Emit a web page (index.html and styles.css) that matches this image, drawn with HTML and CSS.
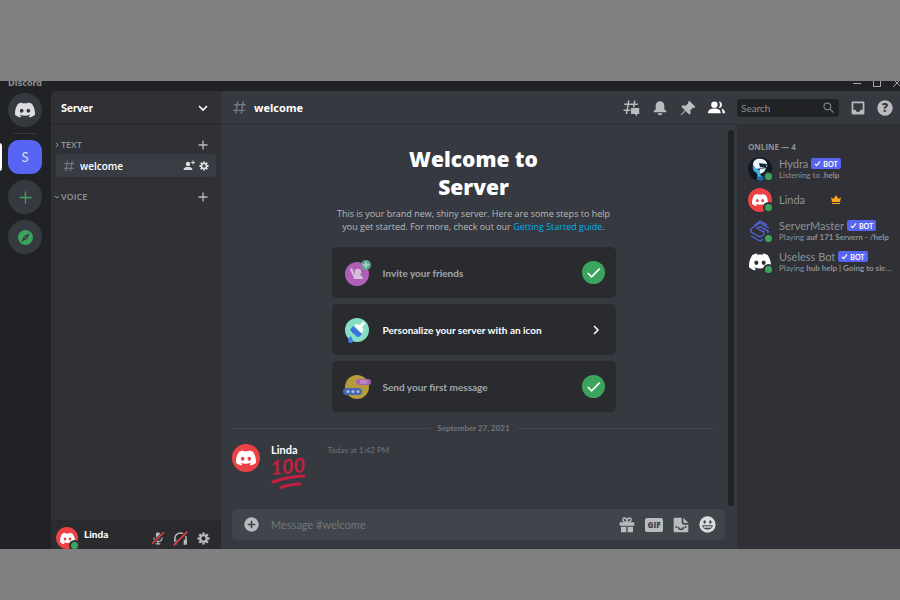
FILE: index.html
```html
<!DOCTYPE html>
<html lang="en">

<head>
  <meta charset="UTF-8" />
  <title>Discord</title>
  <meta name="viewport" content="width=device-width, initial-scale=1.0" />
  <link rel="stylesheet" href="styles.css">
</head>

<body>
  <svg class="sprite" aria-hidden="true">
    <symbol id="logo" viewBox="0 0 24 24">
      <path fill="currentColor" d="M20.317 4.3698a19.7913 19.7913 0 00-4.8851-1.5152.0741.0741 0 00-.0785.0371c-.211.3753-.4447.8648-.6083 1.2495-1.8447-.2762-3.68-.2762-5.4868 0-.1636-.3933-.4058-.8742-.6177-1.2495a.077.077 0 00-.0785-.037 19.7363 19.7363 0 00-4.8852 1.515.0699.0699 0 00-.0321.0277C.5334 9.0458-.319 13.5799.0992 18.0578a.0824.0824 0 00.0312.0561c2.0528 1.5076 4.0413 2.4228 5.9929 3.0294a.0777.0777 0 00.0842-.0276c.4616-.6304.8731-1.2952 1.226-1.9942a.076.076 0 00-.0416-.1057c-.6528-.2476-1.2743-.5495-1.8722-.8923a.077.077 0 01-.0076-.1277c.1258-.0943.2517-.1923.3718-.2914a.0743.0743 0 01.0776-.0105c3.9278 1.7933 8.18 1.7933 12.0614 0a.0739.0739 0 01.0785.0095c.1202.099.246.1981.3728.2924a.077.077 0 01-.0066.1276 12.2986 12.2986 0 01-1.873.8914.0766.0766 0 00-.0407.1067c.3604.698.7719 1.3628 1.225 1.9932a.076.076 0 00.0842.0286c1.961-.6067 3.9495-1.5219 6.0023-3.0294a.077.077 0 00.0313-.0552c.5004-5.177-.8382-9.6739-3.5485-13.6604a.061.061 0 00-.0312-.0286zM8.02 15.3312c-1.1825 0-2.1569-1.0857-2.1569-2.419 0-1.3332.9555-2.4189 2.157-2.4189 1.2108 0 2.1757 1.0952 2.1568 2.419 0 1.3332-.9555 2.4189-2.1569 2.4189zm7.9748 0c-1.1825 0-2.1569-1.0857-2.1569-2.419 0-1.3332.9554-2.4189 2.1569-2.4189 1.2108 0 2.1757 1.0952 2.1568 2.419 0 1.3332-.946 2.4189-2.1568 2.4189Z" />
    </symbol>
    <symbol id="hash" viewBox="0 0 24 24">
      <path fill="none" stroke="currentColor" stroke-width="2" d="M9.5 3 6.5 21M17.5 3l-3 18M4 8h17M3 16h17" />
    </symbol>
    <symbol id="plus" viewBox="0 0 24 24">
      <path fill="none" stroke="currentColor" stroke-width="2.6" d="M12 3v18M3 12h18" />
    </symbol>
    <symbol id="gear" viewBox="0 0 24 24">
      <circle cx="12" cy="12" r="6" fill="none" stroke="currentColor" stroke-width="4" />
      <path stroke="currentColor" stroke-width="4.4" d="M12 1v4M12 19v4M1 12h4M19 12h4M4.200 4.200l2.900 2.900M16.900 16.900l2.900 2.900M4.200 19.800l2.900-2.900M16.900 7.100l2.900-2.900" />
    </symbol>
    <symbol id="check" viewBox="0 0 24 24">
      <circle cx="12" cy="12" r="12" fill="#3ba55d" />
      <path fill="none" stroke="#fff" stroke-width="1.7" d="m6 12.500 4 4 8.500-8.500" />
    </symbol>
    <symbol id="tick" viewBox="0 0 12 12">
      <path fill="none" stroke="currentColor" stroke-width="2" d="m1.500 6.500 3 3 6-7" />
    </symbol>
  </svg>

  <div class="app">
    <div class="titlebar">
      <span class="wordmark">Discord</span>
      <svg class="window-controls" width="47" height="8" viewBox="0 0 47 8">
        <path fill="none" stroke="#a3a6aa" d="M0 2.500h8M20.500-1.500h7v7h-7zM40-2l8 8M40 6l8-8" />
      </svg>
    </div>

    <div class="layout">
      <nav class="guilds">
        <button class="guild home" aria-label="Home"><svg width="20" height="20"><use href="#logo" /></svg></button>
        <div class="guild-separator"></div>
        <button class="guild selected">S</button>
        <button class="guild green" aria-label="Add a server"><svg width="13" height="13" viewBox="0 0 24 24"><path stroke="currentColor" stroke-width="2.400" d="M12 1v22M1 12h22" /></svg></button>
        <button class="guild green" aria-label="Explore"><svg width="15" height="15" viewBox="0 0 24 24"><circle cx="12" cy="12" r="12" fill="currentColor" /><path fill="#36393f" fill-rule="evenodd" d="M19 5 14.500 14.500 5 19l4.500-9.500zM12 10.500a1.500 1.500 0 1 0 0 3 1.500 1.500 0 0 0 0-3z" /></svg></button>
      </nav>

      <aside class="sidebar">
        <button class="server-header">
          <span>Server</span>
          <svg width="10" height="10" viewBox="0 0 10 10"><path fill="none" stroke="#fff" stroke-width="1.600" d="m1 3 4 4 4-4" /></svg>
        </button>
        <div class="channels">
          <div class="category">
            <svg width="6" height="6" viewBox="0 0 6 6"><path fill="none" stroke="currentColor" d="m2 1 2 2-2 2" /></svg>
            <span>TEXT</span>
            <button aria-label="Create channel"><svg width="12" height="12"><use href="#plus" /></svg></button>
          </div>
          <a class="channel" href="#">
            <svg class="channel-hash" width="14" height="14"><use href="#hash" /></svg>
            <span>welcome</span>
            <svg width="12" height="12" viewBox="0 0 24 24"><circle cx="10" cy="8" r="4.500" fill="currentColor" /><path fill="currentColor" d="M1 20c0-5 5-6 9-6s9 1 9 6z" /><path stroke="currentColor" stroke-width="2" d="M20 1v8M16 5h8" /></svg>
            <svg width="10" height="10"><use href="#gear" /></svg>
          </a>
          <div class="category">
            <svg width="6" height="6" viewBox="0 0 6 6"><path fill="none" stroke="currentColor" d="m1 2 2 2 2-2" /></svg>
            <span>VOICE</span>
            <button aria-label="Create channel"><svg width="12" height="12"><use href="#plus" /></svg></button>
          </div>
        </div>
        <div class="user-panel">
          <div class="avatar red small"><svg width="15" height="15"><use href="#logo" /></svg><i class="status"></i></div>
          <span class="user-name">Linda</span>
          <button aria-label="Unmute"><svg width="14" height="14" viewBox="0 0 24 24"><rect x="8.500" y="2" width="7" height="12" rx="3.500" fill="currentColor" /><path fill="none" stroke="currentColor" stroke-width="2" d="M5 11c0 9 14 9 14 0M12 18v4M8 22h8" /><path stroke="#2b2c31" stroke-width="5" d="M2 22 22 2" /><path stroke="#ed4245" stroke-width="2.400" d="M2 22 22 2" /></svg></button>
          <button aria-label="Undeafen"><svg width="15" height="15" viewBox="0 0 24 24"><path fill="none" stroke="currentColor" stroke-width="2.400" d="M3 18v-6a9 9 0 0 1 18 0v8" /><path fill="currentColor" d="M2 14h5v8H2zM17 14h5v8h-5z" /><path stroke="#2b2c31" stroke-width="5" d="M1 23 23 1" /><path stroke="#ed4245" stroke-width="2.400" d="M1 23 23 1" /></svg></button>
          <button aria-label="User settings"><svg width="13" height="13"><use href="#gear" /></svg></button>
        </div>
      </aside>

      <div class="main">
        <header class="toolbar">
          <svg class="toolbar-hash" width="17" height="17"><use href="#hash" /></svg>
          <h2>welcome</h2>
          <div class="tools">
            <button aria-label="Threads"><svg width="18" height="18" viewBox="0 0 24 24"><path fill="none" stroke="currentColor" stroke-width="2" d="M9 2 6 20M17 2l-1.500 9M3 7h18M2 15h9" /><path fill="currentColor" d="M12 12h11v8h-3v3l-3-3h-5z" /></svg></button>
            <button aria-label="Notifications"><svg width="16" height="16" viewBox="0 0 24 24"><path fill="currentColor" d="M12 2a6.500 6.500 0 0 0-6.500 6.500V14L2.500 17v1.500h19V17l-3-3V8.500A6.500 6.500 0 0 0 12 2zM8.500 20a3.500 3 0 0 0 7 0z" /></svg></button>
            <button aria-label="Pinned messages"><svg width="16" height="16" viewBox="0 0 24 24"><path fill="currentColor" d="m14 1 9 9-2 2-1.500-.5-4 4 .5 4.500-2 2-5.500-5.500L2 23l-1-1 6.500-6.500L2 10l2-2 4.500.500 4-4L12 3z" /></svg></button>
            <button class="active" aria-label="Member list"><svg width="17" height="17" viewBox="0 0 24 24"><circle cx="9" cy="8" r="4.500" fill="currentColor" /><path fill="currentColor" d="M0 20c0-5 4-6.500 9-6.500s9 1.500 9 6.500zM15 3.500a4.500 4.500 0 0 1 0 9 7 7 0 0 0 0-9zM18.500 13.500c3.500.8 5.500 2.500 5.500 6.500h-3.500c0-3-.5-5-2-6.500z" /></svg></button>
            <label class="search">
              <input type="text" placeholder="Search" aria-label="Search" />
              <svg width="11" height="11" viewBox="0 0 24 24"><path fill="none" stroke="currentColor" stroke-width="2.200" d="M17 9.500a7.500 7.500 0 1 1-15 0 7.500 7.500 0 0 1 15 0zM15 15l8 8" /></svg>
            </label>
            <button aria-label="Inbox"><svg width="14" height="14" viewBox="0 0 24 24"><path fill="currentColor" fill-rule="evenodd" d="M3 1h18a2 2 0 0 1 2 2v18a2 2 0 0 1-2 2H3a2 2 0 0 1-2-2V3a2 2 0 0 1 2-2zm1 3v11h4c0 5 8 5 8 0h4V4z" /></svg></button>
            <button aria-label="Help"><svg width="16" height="16" viewBox="0 0 24 24"><circle cx="12" cy="12" r="11.500" fill="currentColor" /><text class="help-mark" x="12" y="18.500">?</text></svg></button>
          </div>
        </header>

        <div class="content">
          <main class="chat">
            <div class="scroller">
              <div class="messages">
                <section class="welcome">
                  <h1>Welcome to<br>Server</h1>
                  <p>This is your brand new, shiny server. Here are some steps to help<br>you get started. For more, check out our <a href="#">Getting Started guide</a>.</p>
                  <button class="card done">
                    <svg class="card-icon" width="28" height="28" viewBox="0 0 28 28">
                      <circle cx="14" cy="15" r="12" fill="#b05fb8" />
                      <circle cx="15" cy="13" r="3.200" fill="#d6bfd9" />
                      <path fill="#d6bfd9" d="m7 10 2-1 2.500 6c4 1 8 0 8.500 5H11c-.5-4-3-6-4-10z" />
                      <circle cx="23" cy="6" r="5" fill="#5fa592" />
                      <path stroke="#b6d3cb" stroke-width="1.500" d="M23 3v6M20 6h6" />
                    </svg>
                    <span>Invite your friends</span>
                    <svg width="23" height="23"><use href="#check" /></svg>
                  </button>
                  <button class="card">
                    <svg class="card-icon" width="28" height="28" viewBox="0 0 28 28">
                      <circle cx="14" cy="14" r="12" fill="#86dfc5" />
                      <path fill="#fff" d="m11 9 3-1 3 1 2.500-3 1.700 1.500L19 11l1.500 3-2 3.500z" />
                      <path stroke="#fff" stroke-width="3" stroke-linecap="round" d="m18 10 2.500-2.500" />
                      <path fill="#3e70dd" d="m10 10 9 8-3 3-3-.5-1-2-2-1-1.500-2L7 14z" />
                      <path fill="#3e82f7" d="M7.500 20c3 3.500 3 7 0 7s-3-3.500 0-7z" />
                    </svg>
                    <span>Personalize your server with an icon</span>
                    <svg class="card-arrow" width="10" height="10" viewBox="0 0 10 10"><path fill="none" stroke="currentColor" stroke-width="1.500" d="m3 1 4 4-4 4" /></svg>
                  </button>
                  <button class="card done">
                    <svg class="card-icon" width="28" height="28" viewBox="0 0 28 28">
                      <circle cx="14" cy="14" r="12" fill="#b39b3e" />
                      <rect x="13" y="6" width="15" height="6" rx="3" fill="#aa62b0" />
                      <text class="hi" x="20.500" y="11">HI!</text>
                      <rect x="0" y="15" width="19" height="7" rx="3.500" fill="#4867b3" />
                      <circle cx="5" cy="18.500" r="1.500" fill="#a9b9dd" /><circle cx="10" cy="18.500" r="1.500" fill="#a9b9dd" /><circle cx="15" cy="18.500" r="1.500" fill="#a9b9dd" />
                    </svg>
                    <span>Send your first message</span>
                    <svg width="23" height="23"><use href="#check" /></svg>
                  </button>
                </section>

                <div class="date-divider"><span>September 27, 2021</span></div>

                <article class="message">
                  <div class="avatar red large"><svg width="20" height="20"><use href="#logo" /></svg></div>
                  <div>
                    <div class="message-head"><strong>Linda</strong><time>Today at 1:42 PM</time></div>
                    <svg class="hundred" width="36" height="34" viewBox="0 0 36 34" role="img">
                      <text x="0" y="19" transform="rotate(-5 0 19)">100</text>
                      <path fill="none" stroke="#c41f3f" stroke-width="3" stroke-linecap="round" d="M2 26Q18 20.500 33 20M10 31.500Q20 28 29 28" />
                    </svg>
                  </div>
                </article>
              </div>
              <div class="scrollbar"></div>
            </div>

            <form class="composer">
              <button type="button" aria-label="Attach"><svg width="15" height="15" viewBox="0 0 24 24"><circle cx="12" cy="12" r="11.500" fill="currentColor" /><path stroke="#40444b" stroke-width="2.600" d="M12 6v12M6 12h12" /></svg></button>
              <input type="text" placeholder="Message #welcome" aria-label="Message #welcome" />
              <button type="button" aria-label="Gift"><svg width="16" height="16" viewBox="0 0 24 24"><path fill="currentColor" d="M1 8h22v5H1zM3 14.500h8V23H3zM13 14.500h8V23h-8z" /><path fill="none" stroke="currentColor" stroke-width="2" d="M12 8C4 8 5 1.500 8 1.500S12 5 12 8c0-3 1-6.500 4-6.500S20 8 12 8z" /></svg></button>
              <button type="button" aria-label="GIF"><svg width="18" height="16" viewBox="0 0 18 16"><rect x="0" y="1" width="18" height="14" rx="2" fill="currentColor" /><text class="gif" x="9" y="11">GIF</text></svg></button>
              <button type="button" aria-label="Stickers"><svg width="16" height="16" viewBox="0 0 24 24"><path fill="currentColor" d="M3 1h10v6.500a4 4 0 0 0 4 4h6V21a2 2 0 0 1-2 2H3a2 2 0 0 1-2-2V3a2 2 0 0 1 2-2zM15.500 1 23 9h-5.500a2 2 0 0 1-2-2z" /><path fill="none" stroke="#40444b" stroke-width="2" d="M8 15c1 5 7 5 8 0" /><circle cx="5" cy="15" r="1.500" fill="#40444b" /><circle cx="19" cy="15" r="1.500" fill="#40444b" /></svg></button>
              <button type="button" aria-label="Emoji"><svg width="17" height="17" viewBox="0 0 24 24"><circle cx="12" cy="12" r="11.500" fill="#dcddde" /><ellipse cx="8" cy="8.500" rx="1.700" ry="2.400" fill="#40444b" /><ellipse cx="16" cy="8.500" rx="1.700" ry="2.400" fill="#40444b" /><path fill="#40444b" d="M4.500 13h15c-.5 8-14.500 8-15 0z" /><path fill="#dcddde" d="M6.500 14.500h11v2h-11z" /></svg></button>
            </form>
          </main>

          <aside class="members">
            <h3>ONLINE — 4</h3>
            <div class="member">
              <div class="avatar hydra">
                <svg width="24" height="24" viewBox="0 0 24 24"><circle cx="12" cy="12" r="12" fill="#101923" /><path fill="#eef7fb" d="M5 8C5 2 10 1 14 2s6 4 5 8l-4 1-7 1z" /><path fill="#132a3c" d="m11 6 8 1-1 4-6-1z" /><path fill="#3fb4e3" d="M5 8c2 4 5 5 9 5l-2 4 3 4-5 1-1-6c-3-1-5-4-4-8z" /><path fill="#dff3fa" d="m12 12 6-1-2 4-4 2z" /><path fill="#1b6fa8" d="m9 20 6-1 3 2-5 3-4-1z" /></svg>
                <i class="status"></i>
              </div>
              <div class="member-info">
                <div class="member-name">Hydra <span class="bot"><svg width="7" height="7"><use href="#tick" /></svg>BOT</span></div>
                <div class="activity">Listening to <b>.help</b></div>
              </div>
            </div>
            <div class="member">
              <div class="avatar red"><svg width="16" height="16"><use href="#logo" /></svg><i class="status"></i></div>
              <div class="member-info owner">
                <div class="member-name">Linda</div>
                <svg width="10" height="9" viewBox="0 0 10 9"><path fill="#faa61a" d="m0 2 2.500 2L5 0l2.500 4L10 2 9 7H1zM1 8h8v1H1z" /></svg>
              </div>
            </div>
            <div class="member">
              <div class="avatar">
                <svg width="24" height="24" viewBox="0 0 24 24"><path fill="none" stroke="#5463d8" stroke-width="1.400" d="M3 9.500 12 4l9 5M3 9.500V13l9 5 4-2.500V13l-4-2-3-2 3-1.500 8 4.500v5l-8 5-9-5M6 7l6-5 7 4" /></svg>
                <i class="status"></i>
              </div>
              <div class="member-info">
                <div class="member-name">ServerMaster <span class="bot"><svg width="7" height="7"><use href="#tick" /></svg>BOT</span></div>
                <div class="activity">Playing <b>auf 171 Servern - /help</b></div>
              </div>
            </div>
            <div class="member">
              <div class="avatar white"><svg width="22" height="22"><use href="#logo" /></svg><i class="status"></i></div>
              <div class="member-info">
                <div class="member-name">Useless Bot <span class="bot"><svg width="7" height="7"><use href="#tick" /></svg>BOT</span></div>
                <div class="activity">Playing <b>hub help | Going to sleep soon</b></div>
              </div>
            </div>
          </aside>
        </div>
      </div>
    </div>
  </div>
</body>

</html>
```

FILE: styles.css
```css
:root {
  --bg-rail: #202225;
  --bg-sidebar: #2f3136;
  --bg-chat: #36393f;
  --bg-card: #2a2b2f;
  --muted: #8e9297;
  --icon: #b9bbbe;
  --blurple: #5865f2;
  --green: #3ba55d;
}

* {
  box-sizing: border-box;
}

body {
  margin: 0;
  min-height: 100vh;
  padding: 81px 0 51px;
  display: flex;
  flex-direction: column;
  background: #808080;
  color: #fff;
  font-family: Lato, "Open Sans", sans-serif;
  font-size: 10px;
}

h1,
h2,
h3,
p {
  margin: 0;
}

button {
  display: flex;
  align-items: center;
  justify-content: center;
  padding: 0;
  border: none;
  background: none;
  color: inherit;
  font: inherit;
  cursor: pointer;
}

input {
  min-width: 0;
  flex: 1;
  padding: 0;
  border: none;
  outline: none;
  background: none;
  color: #dcddde;
  font: inherit;
}

a {
  text-decoration: none;
}

svg {
  display: block;
  flex-shrink: 0;
}

.sprite {
  position: absolute;
  width: 0;
  height: 0;
}

.app {
  flex: 1;
  display: flex;
  flex-direction: column;
  background: var(--bg-rail);
  overflow: hidden;
}

.titlebar {
  height: 10px;
  display: flex;
  justify-content: space-between;
  padding-left: 8px;
  overflow: hidden;
}

.wordmark {
  margin-top: -4px;
  color: #8a8d91;
  font: 700 8px/13px "DejaVu Sans", sans-serif;
}

.layout {
  flex: 1;
  display: flex;
}

/* server rail */
.guilds {
  width: 51px;
  padding: 2px 1px 0 0;
  display: flex;
  flex-direction: column;
  align-items: center;
  gap: 6px;
}

.guild {
  width: 34px;
  height: 34px;
  border-radius: 50%;
  background: var(--bg-chat);
  color: #dcddde;
}

.guild.selected {
  position: relative;
  border-radius: 11px;
  background: var(--blurple);
  font-size: 13px;
}

.guild.selected::before {
  content: "";
  position: absolute;
  left: -10px;
  top: 3px;
  width: 4px;
  height: 28px;
  border-radius: 0 3px 3px 0;
  background: #fff;
}

.guild.green {
  color: var(--green);
}

.guild-separator {
  width: 22px;
  height: 1px;
  background: #36393f;
}

/* channel list */
.sidebar {
  width: 170px;
  display: flex;
  flex-direction: column;
  border-radius: 5px 0 0 0;
  background: var(--bg-sidebar);
  overflow: hidden;
}

.server-header {
  height: 34px;
  padding: 0 13px 0 10px;
  justify-content: space-between;
  border-bottom: 1px solid #25272b;
  font-size: 11px;
  font-weight: 900;
}

.channels {
  flex: 1;
  padding: 11px 5px 0 3px;
}

.category {
  height: 18px;
  display: flex;
  align-items: center;
  gap: 1px;
  padding-right: 7px;
  color: var(--muted);
  font: 600 9px/12px "Open Sans", sans-serif;
}

.category button {
  margin-left: auto;
  color: var(--icon);
}

.channel {
  height: 23px;
  margin: 0 0 11px 2px;
  padding: 0 7px 0 6px;
  display: flex;
  align-items: center;
  gap: 4px;
  border-radius: 3px;
  background: #393c43;
  color: #dcddde;
}

.channel span {
  flex: 1;
  color: #fff;
  font: 600 10px/16px "Open Sans", sans-serif;
}

.channel-hash {
  color: #72767d;
}

.user-panel {
  height: 29px;
  padding: 7px 10px 0 5px;
  display: flex;
  align-items: flex-start;
  gap: 8px;
  background: #292b2f;
}

.user-name {
  flex: 1;
  margin-left: -2px;
  font-weight: 900;
  line-height: 14px;
}

.user-panel button {
  width: 15px;
  height: 22px;
  color: var(--icon);
}

/* avatars */
.avatar {
  position: relative;
  flex-shrink: 0;
  width: 24px;
  height: 24px;
  display: flex;
  align-items: center;
  justify-content: center;
  border-radius: 50%;
  color: #fff;
}

.avatar.red {
  background: #ed4245;
}

.avatar.small {
  width: 22px;
  height: 22px;
}

.avatar.large {
  width: 28px;
  height: 28px;
}

.status {
  position: absolute;
  right: -2px;
  bottom: -2px;
  width: 11px;
  height: 11px;
  border: 2px solid var(--bg-sidebar);
  border-radius: 50%;
  background: var(--green);
}

/* header */
.main {
  flex: 1;
  min-width: 0;
  display: flex;
  flex-direction: column;
  background: var(--bg-chat);
}

.toolbar {
  height: 34px;
  padding: 0 7px 0 10px;
  display: flex;
  align-items: center;
  gap: 6px;
  border-bottom: 1px solid #2d2f34;
}

.toolbar-hash {
  color: #72767d;
}

.toolbar h2 {
  flex: 1;
  font: 700 11px/16px "Open Sans", sans-serif;
}

.tools {
  display: flex;
  align-items: center;
  gap: 12px;
  color: var(--icon);
}

.tools .active {
  color: #fff;
}

.search {
  width: 102px;
  height: 18px;
  padding: 0 5px 0 4px;
  display: flex;
  align-items: center;
  border-radius: 3px;
  background: var(--bg-rail);
  color: var(--muted);
}

input::placeholder {
  color: #72767d;
  opacity: 1;
}

.search input::placeholder {
  color: var(--muted);
}

.help-mark {
  fill: var(--bg-chat);
  font: 800 18px "Open Sans", sans-serif;
  text-anchor: middle;
}

.content {
  flex: 1;
  min-height: 0;
  display: flex;
}

/* chat */
.chat {
  flex: 1;
  min-width: 0;
  display: flex;
  flex-direction: column;
}

.scroller {
  flex: 1;
  display: flex;
}

.messages {
  flex: 1;
  padding: 20px 13px 0 11px;
}

.scrollbar {
  width: 6px;
  margin: 5px 3px 3px 0;
  border-radius: 3px;
  background: var(--bg-rail);
}

.welcome {
  width: 284px;
  margin: 0 auto;
  display: flex;
  flex-direction: column;
  gap: 6px;
  text-align: center;
}

.welcome h1 {
  font: 800 21px/28px "Open Sans", sans-serif;
}

.welcome p {
  margin-bottom: 8px;
  color: var(--icon);
  font: 400 9px/13px "Open Sans", sans-serif;
  white-space: nowrap;
}

.welcome a {
  color: #00aff4;
}

.card {
  height: 51px;
  padding: 0 11px;
  gap: 12px;
  border-radius: 5px;
  background: var(--bg-card);
  font-weight: 700;
  text-align: left;
}

.card span {
  flex: 1;
}

.card.done span {
  color: #a3a6aa;
}

.card-arrow {
  margin-right: 4px;
}

.hi {
  fill: #d6a9da;
  font: 700 5px "Open Sans", sans-serif;
  text-anchor: middle;
}

.date-divider {
  margin: 10px 0;
  display: flex;
  align-items: center;
  gap: 6px;
  color: #72767d;
  font-size: 8px;
  font-weight: 700;
  line-height: 12px;
}

.date-divider::before,
.date-divider::after {
  content: "";
  flex: 1;
  height: 1px;
  background: #42454b;
}

.message {
  display: flex;
  gap: 11px;
}

.message-head {
  display: flex;
  align-items: center;
  gap: 30px;
  line-height: 12px;
}

.message-head strong {
  font-size: 11px;
}

.message-head time {
  color: #72767d;
  font-size: 8px;
}

.hundred text {
  fill: #c41f3f;
  font: italic 700 20px Lato, sans-serif;
}

.composer {
  height: 31px;
  margin: 0 12px 9px 11px;
  padding: 0 9px 0 12px;
  display: flex;
  align-items: center;
  gap: 10px;
  border-radius: 5px;
  background: #40444b;
  color: var(--icon);
  font-size: 11px;
}

.composer input {
  padding-left: 2px;
}

.gif {
  fill: #40444b;
  font: 800 8px "Open Sans", sans-serif;
  text-anchor: middle;
}

/* member list */
.members {
  width: 163px;
  padding: 16px 5px 0 11px;
  background: var(--bg-sidebar);
  color: var(--muted);
}

.members h3 {
  font: 700 8px/12px "Open Sans", sans-serif;
}

.member {
  height: 31px;
  display: flex;
  align-items: center;
  gap: 7px;
}

.member .status {
  bottom: -1px;
}

.member-info {
  flex: 1;
  min-width: 0;
}

.member-info.owner {
  display: flex;
  align-items: center;
  gap: 26px;
}

.member-name {
  display: flex;
  align-items: center;
  gap: 3px;
  font-size: 11px;
  line-height: 12px;
}

.bot {
  height: 11px;
  padding: 0 3px;
  display: inline-flex;
  align-items: center;
  gap: 2px;
  border-radius: 2px;
  background: var(--blurple);
  color: #fff;
  font-size: 7px;
  font-weight: 700;
}

.activity {
  overflow: hidden;
  font-size: 8px;
  line-height: 10px;
  text-overflow: ellipsis;
  white-space: nowrap;
}
```
